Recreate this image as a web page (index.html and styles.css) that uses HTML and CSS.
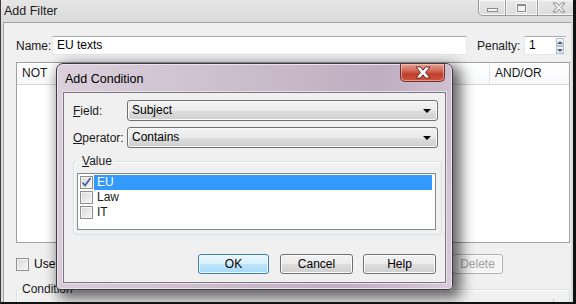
FILE: index.html
```html
<!DOCTYPE html>
<html lang="en">
<head>
  <meta charset="UTF-8" />
  <title>Add Filter</title>
  <link rel="stylesheet" href="styles.css">
</head>
<body>
  <div class="window">
    <div class="titlebar">
      <span class="title">Add Filter</span>
      <div class="caption">
        <span class="cap cap-min"><i class="min-glyph"></i></span>
        <span class="cap cap-max"><i class="max-glyph"></i></span>
        <span class="cap cap-close">
          <svg width="14" height="11" viewBox="0 0 14 11"><path d="M1 1h3.5L7 3.8 9.5 1H13L9 5.5 13 10H9.5L7 7.2 4.5 10H1L5 5.5z" fill="#f4f4f4" stroke="#8a8a8a" stroke-width="1"/></svg>
        </span>
      </div>
    </div>

    <div class="client">
      <div class="name-row">
        <label class="lbl name-lbl">Name:</label>
        <div class="textbox name-box">EU texts</div>
        <label class="lbl penalty-lbl">Penalty:</label>
        <div class="textbox spin">
          <span>1</span>
          <div class="spin-btns">
            <span class="spin-btn"><i class="tri-up"></i></span>
            <span class="spin-btn"><i class="tri-down"></i></span>
          </div>
        </div>
      </div>

      <div class="grid">
        <div class="grid-head">
          <div class="col col-not">NOT</div>
          <div class="col col-mid"></div>
          <div class="col col-andor">AND/OR</div>
        </div>
      </div>

      <div class="use-row">
        <span class="check"></span>
        <span class="use-lbl">Use</span>
        <span class="spacer"></span>
        <button class="btn btn-disabled" disabled>Delete</button>
      </div>

      <fieldset class="group cond-group">
        <legend>Condition</legend>
        <div class="cond-box"><span class="cond-bar"></span></div>
      </fieldset>
    </div>

    <!-- modal dialog on top of the filter window -->
    <div class="dialog">
      <div class="dlg-title">
        <span>Add Condition</span>
        <span class="dlg-close">
          <svg width="18" height="13" viewBox="0 0 18 13"><path d="M2 1h4.5L9 4.2 11.5 1H16L11.5 6.5 16 12H11.5L9 8.8 6.5 12H2L6.5 6.5z" fill="#fff" stroke="#6b2a2a" stroke-width="1"/></svg>
        </span>
      </div>
      <div class="dlg-client">
        <div class="dlg-row">
          <label class="dlg-lbl"><u>F</u>ield:</label>
          <div class="combo">Subject<i class="combo-arrow"></i></div>
        </div>
        <div class="dlg-row">
          <label class="dlg-lbl"><u>O</u>perator:</label>
          <div class="combo">Contains<i class="combo-arrow"></i></div>
        </div>

        <fieldset class="group value-group">
          <legend><u>V</u>alue</legend>
          <div class="listbox">
            <div class="item"><span class="check checked"><svg width="11" height="11" viewBox="0 0 11 11"><path d="M1.5 5.5l2.5 3 5.5-7.5" fill="none" stroke="#4c61a0" stroke-width="1.8"/></svg></span><span class="item-text selected">EU</span></div>
            <div class="item"><span class="check"></span><span class="item-text">Law</span></div>
            <div class="item"><span class="check"></span><span class="item-text">IT</span></div>
          </div>
        </fieldset>

        <div class="dlg-buttons">
          <button class="btn btn-default">OK</button>
          <button class="btn">Cancel</button>
          <button class="btn">Help</button>
        </div>
      </div>
    </div>
  </div>
</body>
</html>
```

FILE: styles.css
```css
body {
  margin: 0;
  background: #000;
  font-family: "Liberation Sans", Arial, sans-serif;
  font-size: 12px;
  color: #000;
}

.window {
  position: relative;
  width: 576px;
  height: 304px;
  box-sizing: border-box;
  border-left: 1px solid #3c3c3c;
  border-right: 3px solid #111;
  border-bottom: 2px solid #111;
  background: #dcdcdc;
  overflow: hidden;
}

/* ---------- outer window ---------- */
.titlebar {
  height: 22px;
  display: flex;
  align-items: flex-start;
  background: linear-gradient(#e6e6e6, #dadada);
}

.title {
  padding: 3px 0 0 3px;
  line-height: 16px;
  font-size: 12.5px;
  color: #1a1a1a;
}

.caption {
  margin-left: auto;
  display: flex;
  margin-right: -8px;
}

.cap {
  height: 15px;
  border: 1px solid #9a9a9a;
  border-top: none;
  box-shadow: inset 0 0 0 1px #f6f6f6;
  background: linear-gradient(#e9e9e9, #dadada);
  display: flex;
  align-items: center;
  justify-content: center;
}

.cap-min {
  width: 26px;
  border-radius: 0 0 0 5px;
}

.cap-max {
  width: 31px;
  border-left: none;
}

.cap-close {
  width: 42px;
  border-left: none;
}

.min-glyph {
  width: 9px;
  height: 2px;
  margin-top: 5px;
  border: 1px solid #8a8a8a;
  background: #f4f4f4;
}

.max-glyph {
  width: 7px;
  height: 5px;
  border: 1px solid #8a8a8a;
  border-top-width: 2px;
  background: #f4f4f4;
  box-shadow: 0 0 0 1px #f4f4f4;
}

.client {
  margin: 0 2px 0 2px;
  height: 300px;
  box-sizing: border-box;
  border-top: 1px solid #a3a3a3;
  border-left: 1px solid #a3a3a3;
  background: #f0f0f0;
  padding: 13px 0 0 12px;
}

.name-row {
  display: flex;
  align-items: center;
  height: 19px;
}

.lbl {
  color: #1a1a1a;
}

.name-lbl {
  width: 36px;
}

.textbox {
  height: 19px;
  box-sizing: border-box;
  background: #fff;
  border: 1px solid #e3e9ef;
  border-top-color: #abadb3;
  line-height: 17px;
  padding-left: 4px;
}

.name-box {
  width: 415px;
}

.penalty-lbl {
  margin-left: 10px;
  width: 47px;
}

.spin {
  width: 42px;
  display: flex;
  padding-right: 1px;
}

.spin-btns {
  margin-left: auto;
  display: flex;
  flex-direction: column;
  width: 8px;
  margin-top: 1px;
}

.spin-btn {
  height: 7px;
  border: 1px solid #b6bcc6;
  background: linear-gradient(#f6f8fa, #dfe6ee);
  display: flex;
  align-items: center;
  justify-content: center;
}

.tri-up,
.tri-down {
  width: 0;
  height: 0;
  border-left: 3px solid transparent;
  border-right: 3px solid transparent;
}

.tri-up {
  border-bottom: 3px solid #4d6185;
}

.tri-down {
  border-top: 3px solid #4d6185;
}

.grid {
  margin-top: 7px;
  width: 554px;
  height: 181px;
  box-sizing: border-box;
  background: #fff;
  border: 1px solid #a0a0a0;
}

.grid-head {
  display: flex;
  height: 21px;
  border-bottom: 1px solid #d5d5d5;
  background: linear-gradient(#ffffff, #f7f8fa);
}

.col {
  padding-left: 5px;
  line-height: 21px;
  color: #1a1a1a;
  border-right: 1px solid #dfe2e6;
}

.col-not {
  width: 70px;
}

.col-mid {
  flex: 1;
}

.col-andor {
  width: 74px;
  border-right: none;
}

.use-row {
  display: flex;
  align-items: center;
  margin-top: 11px;
  height: 20px;
  width: 554px;
}

.check {
  width: 13px;
  height: 13px;
  box-sizing: border-box;
  border: 1px solid #8e8f8f;
  background: linear-gradient(135deg, #d8d8d8, #f7f7f7);
  box-shadow: inset 0 0 0 1px #f4f4f4;
  display: inline-flex;
  align-items: center;
  justify-content: center;
  flex-shrink: 0;
}

.use-lbl {
  margin-left: 5px;
}

.spacer {
  flex: 1;
}

.btn {
  height: 20px;
  box-sizing: border-box;
  font-family: inherit;
  font-size: 12px;
  padding: 0;
  color: #000;
  border: 1px solid #707070;
  border-radius: 3px;
  background: linear-gradient(#f2f2f2 0%, #ebebeb 50%, #dddddd 51%, #cfcfcf 100%);
  box-shadow: inset 0 0 0 1px #fbfbfb;
}

.btn-disabled {
  width: 51px;
  margin-right: 67px;
  color: #a0a0a0;
  border-color: #adb2b5;
  background: #f4f4f4;
}

.group {
  margin: 0;
  border: 1px solid #d5dfe5;
  border-radius: 3px;
  box-shadow: inset 1px 1px 0 #fff;
}

.group legend {
  padding: 0 1px;
  line-height: 14px;
  color: #1a1a1a;
}

.cond-group {
  margin-top: 8px;
  width: 554px;
  box-sizing: border-box;
  padding: 0 15px 0 4px;
  height: 40px;
}

.cond-box {
  height: 30px;
  display: flex;
  justify-content: flex-end;
}

.cond-bar {
  width: 1px;
  margin-top: 3px;
  background: #c8c8c8;
}

/* ---------- Add Condition dialog ---------- */
.dialog {
  position: absolute;
  left: 55px;
  top: 63px;
  width: 397px;
  height: 227px;
  box-sizing: border-box;
  border: 1px solid #3e3a40;
  border-radius: 7px 7px 4px 4px;
  background: linear-gradient(100deg, #dbd0dc 0%, #cbbccc 45%, #bfadc1 75%, #d6cad7 100%);
  box-shadow: inset 0 0 0 1px #ebe3ec, 5px 5px 14px 3px rgba(0, 0, 0, 0.6);
  padding: 0 6px 6px 6px;
  display: flex;
  flex-direction: column;
}

.dlg-title {
  height: 28px;
  display: flex;
  align-items: flex-start;
}

.dlg-title span:first-child {
  padding: 8px 0 0 2px;
  line-height: 14px;
  font-size: 12.5px;
}

.dlg-close {
  margin-left: auto;
  margin-right: 1px;
  width: 45px;
  height: 18px;
  box-sizing: border-box;
  border: 1px solid #6b3030;
  border-top: none;
  border-radius: 0 0 5px 5px;
  background: linear-gradient(#e7a293 0%, #d0685a 40%, #c03c2c 60%, #d0573f 100%);
  box-shadow: inset 0 0 0 1px rgba(255, 220, 210, 0.5);
  display: flex;
  align-items: center;
  justify-content: center;
}

.dlg-client {
  flex: 1;
  box-sizing: border-box;
  background: #f0f0f0;
  border: 1px solid #7d7580;
  box-shadow: 0 0 0 1px #e9e1ea;
  padding: 7px 7px 0 9px;
}

.dlg-row {
  display: flex;
  align-items: center;
  height: 21px;
  margin-bottom: 6px;
}

.dlg-lbl {
  width: 54px;
  color: #1a1a1a;
}

.combo {
  flex: 1;
  height: 21px;
  box-sizing: border-box;
  border: 1px solid #707070;
  border-radius: 3px;
  background: linear-gradient(#f2f2f2 0%, #ebebeb 50%, #dddddd 51%, #cfcfcf 100%);
  box-shadow: inset 0 0 0 1px #fbfbfb;
  line-height: 19px;
  padding-left: 4px;
  display: flex;
  align-items: center;
}

.combo-arrow {
  margin-left: auto;
  margin-right: 6px;
  width: 0;
  height: 0;
  border-left: 4px solid transparent;
  border-right: 4px solid transparent;
  border-top: 4px solid #000;
}

.value-group {
  margin-top: 5px;
  width: 369px;
  box-sizing: border-box;
  padding: 5px 5px 4px 3px;
}

.group.value-group legend {
  padding: 0 2px 0 5px;
}

.listbox {
  height: 57px;
  box-sizing: border-box;
  background: #fff;
  border: 1px solid #828790;
  padding: 1px 3px 0 2px;
}

.item {
  display: flex;
  align-items: center;
  height: 15px;
}

.item-text {
  flex: 1;
  margin-left: 1px;
  padding-left: 3px;
  line-height: 15px;
  color: #1a1a1a;
}

.item-text.selected {
  background: #3399ff;
  color: #fff;
}

.dlg-buttons {
  margin-top: 19px;
  display: flex;
  justify-content: flex-end;
  gap: 10px;
  padding-right: 2px;
}

.dlg-buttons .btn {
  width: 73px;
}

.dlg-buttons .btn-default {
  width: 71px;
  margin-right: 1px;
  border-color: #3c7fb1;
  background: linear-gradient(#eaf6fd 0%, #d9f0fc 50%, #bee6fd 51%, #a7d9f5 100%);
  box-shadow: inset 0 0 0 1px #f0f9fe;
}
```
